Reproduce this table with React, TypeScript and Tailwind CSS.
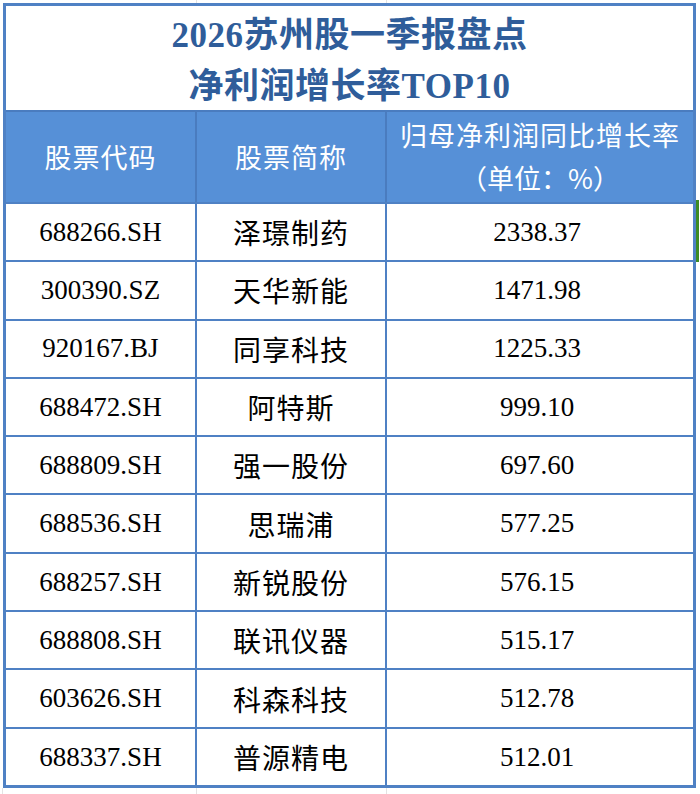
const rows = [
  { code: "688266.SH", name: "泽璟制药", value: "2338.37" },
  { code: "300390.SZ", name: "天华新能", value: "1471.98" },
  { code: "920167.BJ", name: "同享科技", value: "1225.33" },
  { code: "688472.SH", name: "阿特斯", value: "999.10" },
  { code: "688809.SH", name: "强一股份", value: "697.60" },
  { code: "688536.SH", name: "思瑞浦", value: "577.25" },
  { code: "688257.SH", name: "新锐股份", value: "576.15" },
  { code: "688808.SH", name: "联讯仪器", value: "515.17" },
  { code: "603626.SH", name: "科森科技", value: "512.78" },
  { code: "688337.SH", name: "普源精电", value: "512.01" },
];

const serif = "font-['Liberation_Serif','Noto_Sans_CJK_SC',serif]";
const sans = "font-['Noto_Sans_CJK_SC','Liberation_Sans',sans-serif]";

export default function App() {
  return (
    <div className="w-[700px] h-[794px] bg-white overflow-hidden flex flex-col">
      {/* grid stub above the table */}
      <div className="h-[3px] grid grid-cols-[197px_190px_1fr]">
        <div className="border-r border-[#e3e3e3]" />
        <div className="border-r border-[#e3e3e3]" />
        <div />
      </div>

      <div className="flex">
        <div className="w-[3px]" />
        <div className="w-[693px] border-[3px] border-[#4f81c4] flex flex-col">
          {/* title */}
          <div
            className={`h-[104px] pt-[6px] flex flex-col items-center justify-center text-[#2f5d9a] text-[35px] leading-[51px] font-semibold ${serif}`}
          >
            <div className="tracking-[0.5px]">2026苏州股一季报盘点</div>
            <div className="tracking-[0.5px]">净利润增长率TOP10</div>
          </div>

          {/* header */}
          <div
            className={`h-[92px] border-t-2 border-[#4a7cbf] bg-[#5690d7] grid grid-cols-[191px_190px_1fr] text-white text-[27px] ${sans}`}
          >
            <div className="border-r-2 border-[#4a7cbf] flex items-center justify-center tracking-[1px]">
              股票代码
            </div>
            <div className="border-r-2 border-[#4a7cbf] flex items-center justify-center tracking-[1px]">
              股票简称
            </div>
            <div className="flex flex-col items-center justify-center leading-[43px] pb-[2px]">
              <div className="tracking-[1px]">归母净利润同比增长率</div>
              <div>（单位：%）</div>
            </div>
          </div>

          {/* body */}
          {rows.map((r) => (
            <div
              key={r.code}
              className={`h-[58.3px] border-t-2 border-[#4f81c4] grid grid-cols-[191px_190px_1fr] text-black text-[27px] ${serif}`}
            >
              <div className="border-r-2 border-[#4f81c4] flex items-center justify-center">
                {r.code}
              </div>
              <div
                className={`border-r-2 border-[#4f81c4] flex items-center justify-center text-[28px] tracking-[1px] ${sans}`}
              >
                {r.name}
              </div>
              <div className="flex items-center justify-center pr-[6px]">{r.value}</div>
            </div>
          ))}
        </div>

        {/* next column with Excel selection edge */}
        <div className="flex-1 flex flex-col">
          <div className="h-[197px]" />
          <div className="h-[62px] border-l-[3px] border-[#3d8b24]" />
        </div>
      </div>

      {/* grid stub below the table */}
      <div className="flex-1 grid grid-cols-[3px_194px_190px_1fr]">
        <div className="border-r border-[#e3e3e3]" />
        <div className="border-r border-[#e3e3e3]" />
        <div className="border-r border-[#e3e3e3]" />
        <div />
      </div>
    </div>
  );
}
